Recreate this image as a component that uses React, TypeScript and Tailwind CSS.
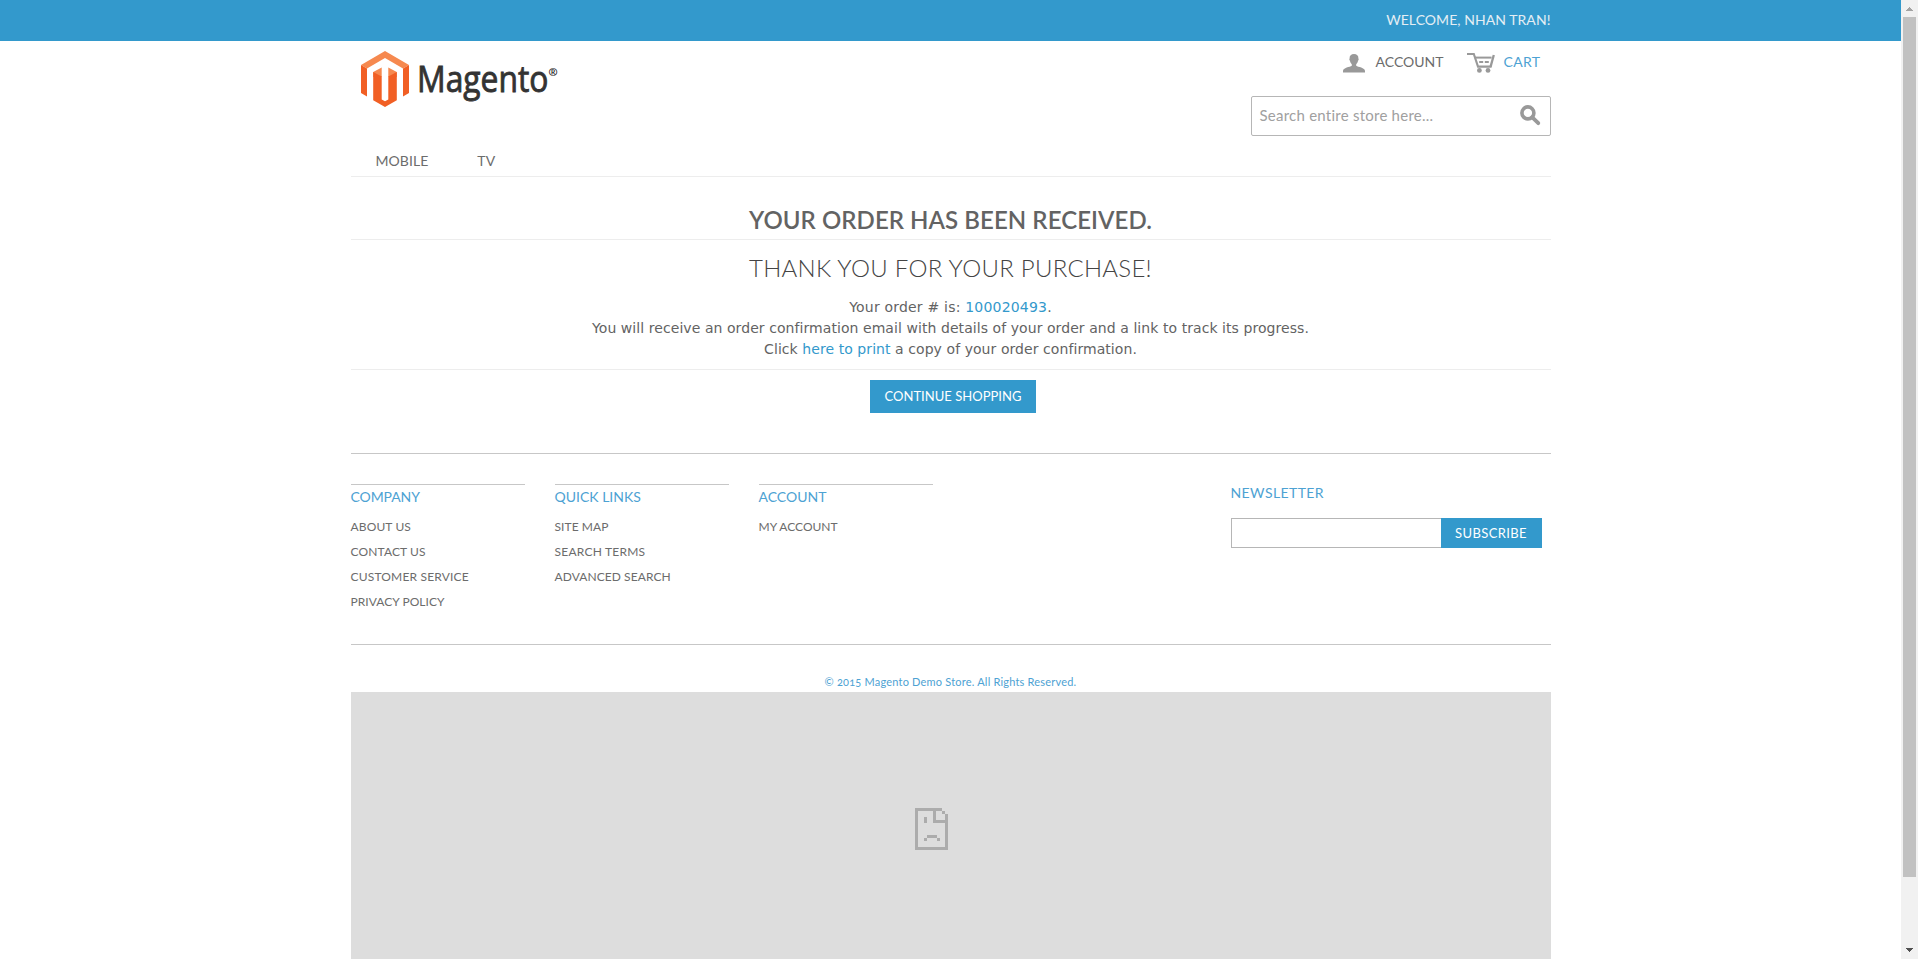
import type { ReactNode } from "react";

function MagentoLogo() {
  return (
    <svg width="220" height="60" viewBox="0 0 220 60" aria-label="Magento" className="block">
      <path d="M24 0 48 14 42 17.6 24 7 6 17.6 0 14z" fill="#f6894f" />
      <path d="M0 14 6 17.6V45.5L0 42zM48 14 42 17.6V45.5L48 42z" fill="#f15f24" />
      <path d="M12.2 21 20.7 16.4V26H12.2zM35.8 21 27.3 16.4V26H35.8z" fill="#f6894f" />
      <path d="M12.2 21 20.7 25.6V48.5L24 50.2 27.3 48.5V25.6L35.8 21V49.2L24 56 12.2 49.2z" fill="#f15f24" />
      <text
        x="56"
        y="41"
        textLength="131.5"
        lengthAdjust="spacingAndGlyphs"
        stroke="#333333"
        strokeWidth="0.9"
        className="fill-[#333333] font-['Open_Sans'] text-[37px] font-medium"
      >
        Magento
      </text>
      <text x="187.5" y="25" className="fill-[#222222] font-['Open_Sans'] text-[11px] font-bold">
        ®
      </text>
    </svg>
  );
}

function AccountIcon() {
  return (
    <svg width="22" height="19" viewBox="0 0 22 19" fill="#999999">
      <path d="M11 0C13.8 0 15.6 1.7 15.4 4.4 15.8 4.7 15.8 6.2 15.1 6.6 14.8 8.3 14 9.4 13.2 10.2V11.8C15 13.2 22 13.6 22 17V18.4H0V17C0 13.6 7 13.2 8.8 11.8V10.2C8 9.4 7.2 8.3 6.9 6.6 6.2 6.2 6.2 4.7 6.6 4.4 6.4 1.7 8.2 0 11 0z" />
    </svg>
  );
}

function CartIcon() {
  return (
    <svg width="28" height="20" viewBox="0 0 28 20" fill="none" stroke="#999999">
      <path d="M0 1H6.8L11 13.6H24.6" strokeWidth="2.1" />
      <path d="M7.8 4.6H24.6" strokeWidth="2" />
      <path d="M26.8 2 23.6 13.6" strokeWidth="2.3" />
      <path d="M12.2 9H16.2M17.8 9H21.8" strokeWidth="2.2" />
      <circle cx="12.4" cy="17.4" r="2.4" fill="#999999" stroke="none" />
      <circle cx="21" cy="17.4" r="2.4" fill="#999999" stroke="none" />
    </svg>
  );
}

function SearchIcon() {
  return (
    <svg width="21" height="21" viewBox="0 0 21 21" fill="none" stroke="#999999">
      <circle cx="7.9" cy="7.9" r="6" strokeWidth="3.6" />
      <path d="M12.3 12.3 18.3 18.2" strokeWidth="3.8" strokeLinecap="round" />
    </svg>
  );
}

function SadPageIcon() {
  return (
    <svg width="33" height="42" viewBox="0 0 11 14" fill="#acacac" shapeRendering="crispEdges">
      <path d="M0 0H9V1H1V13H10V5H6V1H7V4H10V2H11V14H0zM9 1H10V2H9zM3 3H4V5H3zM4 9H7.4V10H4zM3 10H4V11H3zM7.4 10H8.4V11H7.4z" />
    </svg>
  );
}

function Column({ title, children }: { title: ReactNode; children: ReactNode }) {
  return (
    <div className="w-[174px] border-t border-[#c7c7c7]">
      <h4 className="flex h-[23px] items-center text-[14px] text-[#4da2d3]">{title}</h4>
      <ul className="mt-1.5 text-[12px] leading-[25px] whitespace-nowrap text-[#6c6c6c]">{children}</ul>
    </div>
  );
}

function Scrollbar() {
  return (
    <div className="flex w-[17px] shrink-0 flex-col items-center bg-[#f1f1f1]">
      <div className="flex h-[17px] items-center">
        <svg width="7" height="4" viewBox="0 0 7 4" fill="#a3a3a3" shapeRendering="crispEdges">
          <path d="M3 0H4V1H5V2H6V3H7V4H0V3H1V2H2V1H3z" />
        </svg>
      </div>
      <div className="h-[860px] w-[13px] bg-[#c1c1c1]" />
      <div className="mt-auto flex h-[17px] items-start pt-[6px]">
        <svg width="7" height="4" viewBox="0 0 7 4" fill="#505050" shapeRendering="crispEdges">
          <path d="M0 0H7V1H6V2H5V3H4V4H3V3H2V2H1V1H0z" />
        </svg>
      </div>
    </div>
  );
}

export default function App() {
  return (
    <div className="flex h-[959px] w-[1918px] overflow-hidden bg-white font-[Lato,sans-serif] text-[#636363]">
      <div className="flex min-w-0 flex-1 flex-col">
        <div className="h-[41px] bg-[#3399cc]">
          <div className="mx-auto flex h-[39px] w-[1200px] items-center justify-end text-[14px] tracking-[0.06px] text-[#e4eef4]">
            WELCOME, NHAN TRAN!
          </div>
        </div>

        <div className="mx-auto flex w-[1200px] flex-1 flex-col">
          <header className="flex h-[106px] justify-between">
            <a className="pt-2.5 pl-2.5">
              <MagentoLogo />
            </a>
            <div className="w-[300px]">
              <div className="mt-2 flex h-[25px] items-center justify-end pr-2.5 text-[14px]">
                <div className="flex items-center">
                  <span className="mt-[3px] mr-[11px]">
                    <AccountIcon />
                  </span>
                  <span className="text-[#6c6c6c]">ACCOUNT</span>
                </div>
                <div className="ml-[23px] flex items-center text-[#4da2d3]">
                  <span className="mt-[3px] mr-[9px]">
                    <CartIcon />
                  </span>
                  <span className="tracking-[0.36px]">CART</span>
                </div>
              </div>
              <div className="mt-[22px] flex h-10 items-center justify-between rounded-[2px] border border-[#b6b6b6] pr-[9px] pl-2">
                <span className="-mt-0.5 text-[15px] tracking-[0.24px] text-[#a0a0a0]">Search entire store here...</span>
                <span className="-mt-0.5">
                  <SearchIcon />
                </span>
              </div>
            </div>
          </header>

          <nav className="flex h-[30px] border-b border-[#ededed] pl-[25px] text-[14px] leading-[27px] text-[#6c6c6c]">
            <a className="mr-[49px] tracking-[0.06px]">MOBILE</a>
            <a className="tracking-[0.12px]">TV</a>
          </nav>

          <main className="text-center">
            <h1 className="mt-[25px] flex h-[38px] items-center justify-center border-b border-[#ededed] pb-px text-[24px] font-semibold tracking-[0.06px]">
              YOUR ORDER HAS BEEN RECEIVED.
            </h1>
            <h2 className="flex h-[57px] items-center justify-center pb-0.5 text-[24px] font-light tracking-[0.268px] text-[#444444]">
              THANK YOU FOR YOUR PURCHASE!
            </h2>
            <div className="border-b border-[#ededed] pb-[9px] font-['DejaVu_Sans'] text-[14px] leading-[21px] tracking-[0.067px]">
              <p className="tracking-[0.2px]">
                Your order # is: <a className="text-[#3399cc]">100020493</a>.
              </p>
              <p>You will receive an order confirmation email with details of your order and a link to track its progress.</p>
              <p>
                Click <a className="text-[#3399cc]">here to print</a> a copy of your order confirmation.
              </p>
            </div>
            <div className="mt-2.5 flex justify-center pl-[5px]">
              <button className="h-[33px] w-[166px] bg-[#3399cc] pt-px text-[13px] tracking-[0.03px] text-white">
                CONTINUE SHOPPING
              </button>
            </div>
          </main>

          <footer className="mt-10 flex justify-between border-t border-b border-[#c7c7c7] pt-[30px] pb-[30px]">
            <div className="flex gap-[30px]">
              <Column title={<span className="tracking-[-0.1px]">COMPANY</span>}>
                <li className="tracking-[0.13px]">ABOUT US</li>
                <li className="tracking-[0.13px]">CONTACT US</li>
                <li className="tracking-[0.18px]">CUSTOMER SERVICE</li>
                <li className="tracking-[0.04px]">PRIVACY POLICY</li>
              </Column>
              <Column title="QUICK LINKS">
                <li className="tracking-[0.07px]">SITE MAP</li>
                <li className="tracking-[0.23px]">SEARCH TERMS</li>
                <li className="tracking-[0.08px]">ADVANCED SEARCH</li>
              </Column>
              <Column title="ACCOUNT">
                <li>MY ACCOUNT</li>
              </Column>
            </div>
            <div className="mr-[9px] w-[311px]">
              <h4 className="flex h-[17px] items-center text-[14px] tracking-[0.4px] text-[#4da2d3]">NEWSLETTER</h4>
              <div className="mt-[17px] flex h-[30px]">
                <div className="flex-1 border border-r-0 border-[#b6b6b6]" />
                <button className="w-[101px] bg-[#3399cc] pt-0.5 text-[13px] tracking-[0.39px] text-white">SUBSCRIBE</button>
              </div>
            </div>
          </footer>

          <div className="mt-[27px] flex h-5 items-center justify-center text-[11px] tracking-[0.2px] text-[#4da2d3]">
            <span className="[font-variant-numeric:oldstyle-nums]">© 2015 Magento Demo Store. All Rights Reserved.</span>
          </div>
          <div className="flex flex-1 justify-center bg-[#dddddd] pt-[116px] pr-[38px]">
            <SadPageIcon />
          </div>
        </div>
      </div>
      <Scrollbar />
    </div>
  );
}
